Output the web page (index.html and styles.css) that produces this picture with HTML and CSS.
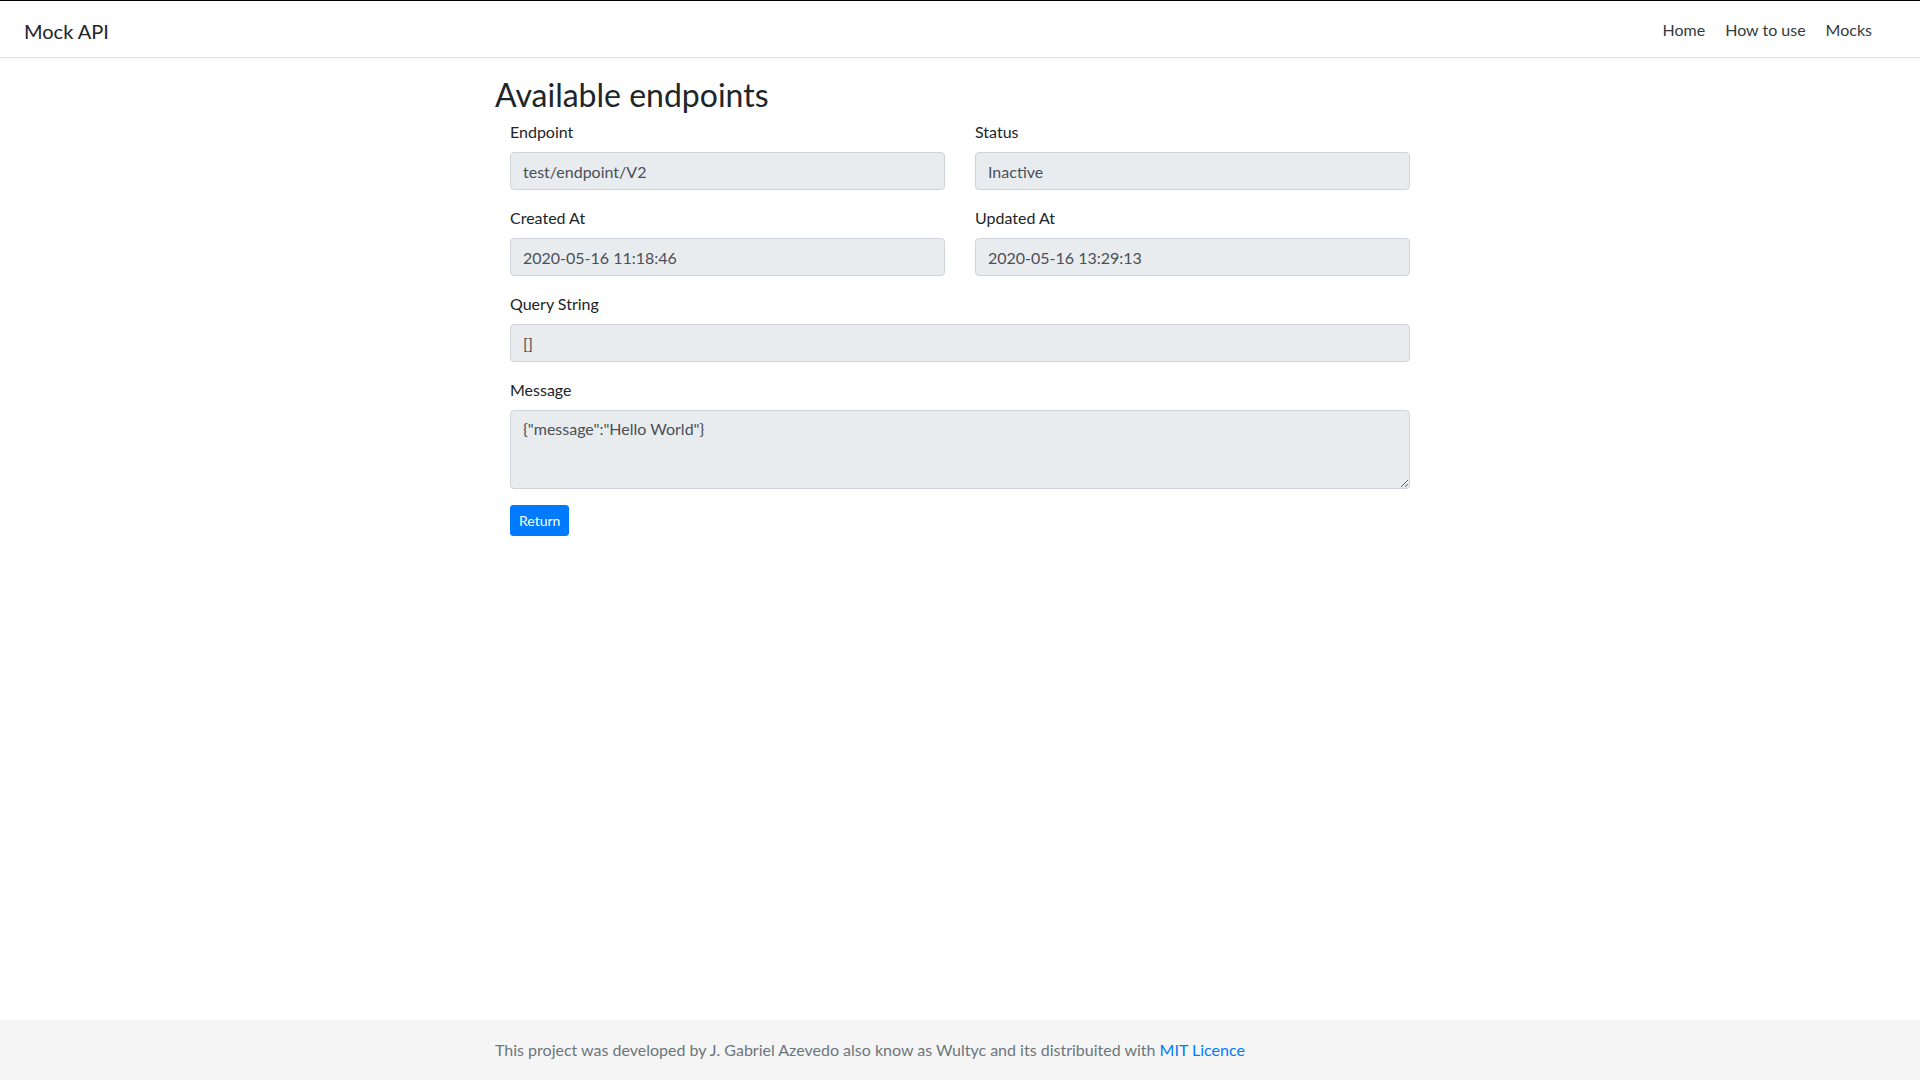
FILE: index.html
```html
<!DOCTYPE html>
<html lang="en">
<head>
<meta charset="utf-8">
<title>Mock API</title>
<link rel="stylesheet" href="styles.css">
</head>
<body>
<nav class="navbar">
  <a class="brand" href="#">Mock API</a>
  <ul class="nav">
    <li><a class="nav-link" href="#">Home</a></li>
    <li><a class="nav-link" href="#">How to use</a></li>
    <li><a class="nav-link" href="#">Mocks</a></li>
  </ul>
</nav>
<main class="main">
  <div class="container">
    <h2 class="title">Available endpoints</h2>
    <form class="form">
      <div class="row">
        <div class="group">
          <label class="label">Endpoint</label>
          <input class="control" type="text" value="test/endpoint/V2" readonly>
        </div>
        <div class="group">
          <label class="label">Status</label>
          <input class="control" type="text" value="Inactive" readonly>
        </div>
      </div>
      <div class="row">
        <div class="group">
          <label class="label">Created At</label>
          <input class="control" type="text" value="2020-05-16 11:18:46" readonly>
        </div>
        <div class="group">
          <label class="label">Updated At</label>
          <input class="control" type="text" value="2020-05-16 13:29:13" readonly>
        </div>
      </div>
      <div class="group">
        <label class="label">Query String</label>
        <input class="control" type="text" value="[]" readonly>
      </div>
      <div class="group">
        <label class="label">Message</label>
        <textarea class="control area" readonly>{"message":"Hello World"}</textarea>
      </div>
      <button type="button" class="btn">Return</button>
    </form>
  </div>
</main>
<footer class="footer">
  <div class="container">
    <span class="muted">This project was developed by J. Gabriel Azevedo also know as Wultyc and its distribuited with <a class="link" href="#">MIT Licence</a></span>
  </div>
</footer>
</body>
</html>
```
FILE: styles.css
```css
* { box-sizing: border-box; }
html, body { height: 100%; }
body {
  margin: 0;
  border-top: 1px solid #000;
  font-family: "Lato", "Liberation Sans", sans-serif;
  font-size: 16px;
  line-height: 1.5;
  color: #212529;
  background: #fff;
  display: flex;
  flex-direction: column;
}
a { text-decoration: none; }

.navbar {
  height: 56px;
  flex: none;
  display: flex;
  align-items: center;
  justify-content: space-between;
  padding: 0 38px 0 24px;
  background: #fff;
  box-shadow: 0 1px 1px rgba(0,0,0,.09), 0 2px 6px rgba(0,0,0,.04);
  position: relative;
  z-index: 1;
}
.brand {
  font-size: 20px;
  line-height: 30px;
  color: #212529;
  padding-top: 3px;
}
.nav {
  list-style: none;
  margin: 0;
  padding: 0;
  display: flex;
}
.nav-link {
  display: block;
  padding: 2px 10px 0;
  color: #343a40;
  font-size: 16px;
  line-height: 24px;
}

.main { flex: 1; }
.container {
  max-width: 960px;
  margin: 0 auto;
  padding: 0 15px;
}
.title {
  margin: 19px 0 6px;
  font-size: 32px;
  font-weight: 400;
  line-height: 1.2;
}
.form { padding: 0 15px; }
.row {
  display: grid;
  grid-template-columns: 1fr 1fr;
  column-gap: 30px;
}
.group { margin-bottom: 16px; }
.label {
  display: inline-block;
  margin-bottom: 8px;
}
.control {
  display: block;
  width: 100%;
  height: 38px;
  padding: 6px 12px;
  font-family: inherit;
  font-size: 16px;
  line-height: 24px;
  color: #495057;
  background: #e9ecef;
  border: 1px solid #ced4da;
  border-radius: 4px;
  outline: none;
}
.area {
  height: 79px;
  resize: vertical;
  margin: 0;
}
.btn {
  display: inline-block;
  padding: 4px 8px;
  font-family: inherit;
  font-size: 14px;
  line-height: 21px;
  color: #fff;
  background: #007bff;
  border: 1px solid #007bff;
  border-radius: 3px;
}

.footer {
  flex: none;
  height: 60px;
  background: #f5f5f5;
  line-height: 60px;
}
.muted { color: #6c757d; }
.link { color: #007bff; }
```
